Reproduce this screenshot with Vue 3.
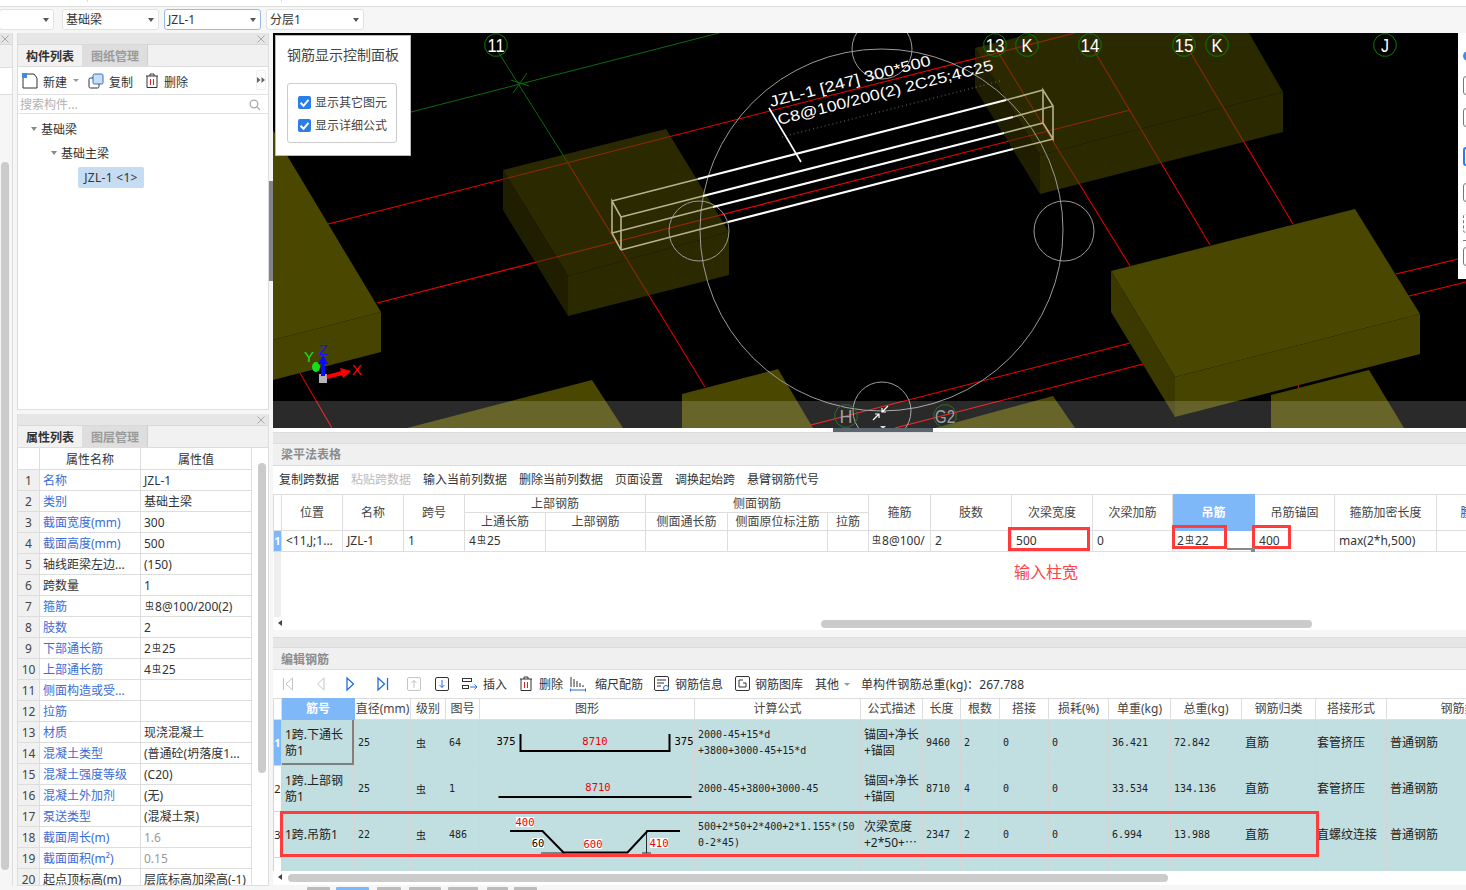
<template>
  <div class="app">
    <div class="topstrip"><i></i><i></i></div>
    <div class="selectbar">
      <div class="sel first"><span></span><b></b></div>
      <div class="sel"><span>基础梁</span><b></b></div>
      <div class="sel active"><span>JZL-1</span><b></b></div>
      <div class="sel last"><span>分层1</span><b></b></div>
    </div>

    <div class="work">
      <aside class="rail">
        <div class="phead"><svg class="close" width="8" height="8" viewBox="0 0 8 8"><path d="M.5.5l7 7M7.500.5l-7 7" stroke="#aaa" /></svg></div>
        <div class="rail-tab"></div>
        <div class="rail-tool"></div>
        <div class="rail-thumb"></div>
      </aside>

      <div class="leftcol">
        <section class="panel tree-panel">
          <div class="phead"><svg class="close" width="8" height="8" viewBox="0 0 8 8"><path d="M.5.5l7 7M7.500.5l-7 7" stroke="#aaa" /></svg></div>
          <div class="tabs">
            <span class="tab on">构件列表</span><span class="tab">图纸管理</span>
          </div>
          <div class="ltool">
            <svg width="16" height="16" viewBox="0 0 16 16" class="ic">
              <path d="M1 4v11h14V5l-3-4H5" fill="#fff" stroke="#333" />
              <rect x="0" y="0" width="5" height="5" fill="#3f8ae8" />
            </svg>
            <span class="lbl">新建</span><b class="mini-caret"></b>
            <svg width="16" height="16" viewBox="0 0 16 16" class="ic copy">
              <rect x="1" y="5" width="10" height="10" rx="1.5" fill="#fff" stroke="#333" />
              <rect x="5" y="1" width="10" height="10" rx="1.5" fill="#c9ddf8" stroke="#2f6fc0" />
            </svg>
            <span class="lbl">复制</span>
            <svg width="14" height="16" viewBox="0 0 14 16" class="ic del">
              <path d="M1 3h12M5 3V1h4v2M2 3v11.5h10V3" fill="none" stroke="#333" />
              <path d="M5.5 6v6M8.5 6v6" stroke="#d22" />
            </svg>
            <span class="lbl">删除</span>
            <span class="more"><svg width="8" height="6" viewBox="0 0 8 6"><path d="M0 0l3.500 3L0 6zM4.500 0L8 3 4.500 6z" fill="#666" /></svg></span>
          </div>
          <div class="search">
            <span>搜索构件...</span>
            <svg width="12" height="12" viewBox="0 0 12 12">
              <circle cx="5" cy="5" r="3.8" fill="none" stroke="#aaa" stroke-width="1.3" />
              <path d="M8 8l3 3" stroke="#aaa" stroke-width="1.3" />
            </svg>
          </div>
          <div class="tree">
            <div class="node n1"><b></b>基础梁</div>
            <div class="node n2"><b></b>基础主梁</div>
            <div class="leaf">JZL-1  &lt;1&gt;</div>
          </div>
        </section>

        <section class="panel prop-panel">
          <div class="phead"><svg class="close" width="8" height="8" viewBox="0 0 8 8"><path d="M.5.5l7 7M7.500.5l-7 7" stroke="#aaa" /></svg></div>
          <div class="tabs">
            <span class="tab on">属性列表</span><span class="tab">图层管理</span>
          </div>
          <div class="prop-body">
            <table class="grid props">
              <colgroup><col style="width:22px" /><col style="width:101px" /><col style="width:111px" /></colgroup>
              <thead>
                <tr><th></th><th>属性名称</th><th>属性值</th></tr>
              </thead>
              <tbody>
                <tr v-for="(p, i) in props" :key="i">
                  <td class="idx">{{ i + 1 }}</td>
                  <td :class="{ blue: p.blue }">{{ p.name }}</td>
                  <td :class="{ muted: p.muted }">
                    <template v-if="p.bar">{{ p.bar[0] }}<span class="bar">虫</span>{{ p.bar[1] }}</template>
                    <template v-else>{{ p.value }}</template>
                  </td>
                </tr>
              </tbody>
            </table>
            <div class="vscroll"><div class="vthumb"></div></div>
          </div>
        </section>
      </div>

      <div class="splitter"><div class="split-grip"></div></div>

      <div class="main">
        <div class="viewport">
          <svg class="scene" width="1193" height="395" viewBox="273 33 1193 395">
            <rect x="273" y="33" width="1193" height="395" fill="#000" />
            <!-- axis lines -->
            <g fill="none" stroke="#e00000" stroke-width="1.1">
              <path d="M328 224L1075 33" stroke="#f00000" />
              <path d="M377 303L1130 110" stroke="#f00000" />
              <path d="M568 163L705 387" />
              <path d="M998 52L1130 266" />
              <path d="M1092 47L1210 245" />
              <path d="M1189 50L1293 224" />
              <path d="M300 373L332 428" />
              <path d="M799 428L1130 343M1396 274L1458 259" stroke="#f00000" />
              <path d="M895 428L1143 364M1409 296L1466 282" stroke="#f00000" />
              <path d="M1298 385l1 4" />
            </g>
            <g fill="none" stroke="#0b6b0b" stroke-width="1">
              <path d="M497 50L568 163" />
              <path d="M411 112L719 33" />
              <path d="M513 93L527 73" />
              <path d="M511 80L529 86" />
            </g>
            <!-- faint blocks -->
            <g opacity="0.58">
              <polygon points="503,170 666,129 729,232 568,276" fill="#4a4700" />
              <polygon points="503,170 568,276 568,316 503,210" fill="#363400" />
              <polygon points="568,276 729,232 729,275 568,316" fill="#4a4700" />
              <polygon points="975,48 1035,33 1249,33 1283,92 1040,155" fill="#4a4700" />
              <polygon points="975,48 1040,155 1040,194 975,88" fill="#363400" />
              <polygon points="1040,155 1283,92 1283,132 1040,194" fill="#4a4700" />
            </g>
            <!-- solid blocks -->
            <polygon points="273,130 288,157 381,312 273,340" fill="#4a4700" />
            <polygon points="273,340 381,312 381,352 273,380" fill="#474400" />
            <polygon points="407,428 592,380 623,428" fill="#4a4700" />
            <polygon points="682,394 778,369 813,428 682,428" fill="#4a4700" />
            <polygon points="935,428 1053,396 1075,428" fill="#4a4700" />
            <polygon points="1271,395 1369,370 1404,428 1271,428" fill="#4a4700" />
            <polygon points="1111,271 1355,209 1420,314 1175,377" fill="#4a4700" />
            <polygon points="1111,271 1175,377 1175,417 1111,312" fill="#3b3900" />
            <polygon points="1175,377 1420,314 1420,354 1175,417" fill="#474400" />
            <!-- construction circles -->
            <g fill="none" stroke="#9a9a9a" stroke-width="1">
              <ellipse cx="881.5" cy="230" rx="181.5" ry="181" />
              <circle cx="699" cy="231" r="30" />
              <circle cx="1064" cy="231" r="30" />
              <circle cx="882" cy="49" r="30" />
              <circle cx="882" cy="411" r="29" />
            </g>
            <!-- beam wireframe -->
            <g fill="none" stroke="#b6b28b" stroke-width="1.6">
              <path d="M612 201L698 179M621 217L703 196M612 233L713 207M621 250L728 222" />
              <path d="M1006 100L1043 90M1013 117L1053 106M1004 133L1043 123M1013 149L1053 139" />
              <path d="M612 201v32l9 17v-33zM1043 90v33l10 16v-33z" />
            </g>
            <g fill="none" stroke="#fff" stroke-width="2.2">
              <path d="M698 179L1006 100M703 196L1013 117M713 207L1004 133M728 222L1013 149" />
              <path d="M769 108L801 162" stroke-width="1.6" />
            </g>
            <!-- beam label -->
            <path d="M782 137L1000 81" stroke="#777" stroke-dasharray="1 3" />
            <g class="beam-text" fill="#fff">
              <text transform="translate(771 107) rotate(-14.6)" textLength="166" lengthAdjust="spacingAndGlyphs">JZL-1 [247] 300*500</text>
              <text transform="translate(779 125) rotate(-14.4)" textLength="222" lengthAdjust="spacingAndGlyphs">C8@100/200(2) 2C25;4C25</text>
            </g>
            <!-- axis bubbles -->
            <g v-for="a in bubbles" :key="a.t + a.x">
              <polygon :points="gon(a.x, 45, 11.5)" fill="none" stroke="#0a7a0a" />
              <text class="bubble" :x="a.x" y="51.5" text-anchor="middle" :textLength="a.w" lengthAdjust="spacingAndGlyphs">{{ a.t }}</text>
            </g>
            <polygon :points="gon(846, 416, 11.5)" fill="none" stroke="#084f08" />
            <text class="bubble dim" x="846" y="423" text-anchor="middle">H</text>
            <polygon :points="gon(945, 416, 11.5)" fill="none" stroke="#084f08" />
            <text class="bubble dim" x="945" y="423" text-anchor="middle" textLength="20" lengthAdjust="spacingAndGlyphs">G2</text>
            <!-- coordinate gizmo -->
            <g>
              <rect x="319" y="374" width="8" height="9" fill="#b5b5b5" />
              <ellipse cx="316" cy="367" rx="4" ry="5" fill="#18e018" />
              <path d="M327 377L342 373" stroke="#f00" stroke-width="4" />
              <polygon points="340,368 351,371 343,378" fill="#f00" />
              <path d="M323 376V362" stroke="#0a0aff" stroke-width="4" />
              <polygon points="318,364 323,355 328,364" fill="#0a0aff" />
              <text class="giz" x="309" y="362" fill="#18e018" text-anchor="middle">Y</text>
              <text class="giz" x="323" y="355" fill="#1414ff" text-anchor="middle">Z</text>
              <text class="giz" x="357" y="375" fill="#f00" text-anchor="middle">X</text>
            </g>
            <!-- bottom bar -->
            <rect x="273" y="401" width="1193" height="27" fill="#fff" fill-opacity="0.165" />
            <g stroke="#fff" stroke-width="1.2" fill="none">
              <path d="M873 420L879 414M879 418V414H875" />
              <path d="M888 406L882 412M882 408V412H886" />
            </g>
            <polygon points="880,426 886,426 883,429" fill="#ddd" />
          </svg>

          <div class="control">
            <h4>钢筋显示控制面板</h4>
            <div class="control-box">
              <label class="chk"><span class="tick"><svg width="13" height="13" viewBox="0 0 13 13"><path d="M2.5 6.8l3 3 5-6" fill="none" stroke="#fff" stroke-width="2" /></svg></span>显示其它图元</label>
              <label class="chk"><span class="tick"><svg width="13" height="13" viewBox="0 0 13 13"><path d="M2.5 6.8l3 3 5-6" fill="none" stroke="#fff" stroke-width="2" /></svg></span>显示详细公式</label>
            </div>
          </div>

          <div class="side-strip">
            <span class="s1"></span><span class="s2"></span><span class="s2 s3"></span>
            <span class="s2 s4"></span><span class="s2 s5"></span><span class="s2 s6"></span><span class="s7"></span><span class="s2 s8"></span>
          </div>
        </div>

        <div class="handle"><div class="handle-bar"></div></div>

        <section class="tbl-panel upper">
          <div class="phead2"></div>
          <div class="ptitle">梁平法表格</div>
          <div class="utool">
            <span v-for="t in upperTools" :key="t" :class="{ off: t === '粘贴跨数据' }">{{ t }}</span>
          </div>
          <div class="utable">
            <table class="grid ut">
              <colgroup>
                <col v-for="(w, i) in upperCols" :key="i" :style="{ width: w + 'px' }" />
              </colgroup>
              <thead>
                <tr>
                  <th rowspan="2"></th>
                  <th rowspan="2">位置</th>
                  <th rowspan="2">名称</th>
                  <th rowspan="2">跨号</th>
                  <th colspan="2">上部钢筋</th>
                  <th colspan="3">侧面钢筋</th>
                  <th rowspan="2">箍筋</th>
                  <th rowspan="2">肢数</th>
                  <th rowspan="2">次梁宽度</th>
                  <th rowspan="2">次梁加筋</th>
                  <th rowspan="2" class="hot">吊筋</th>
                  <th rowspan="2">吊筋锚固</th>
                  <th rowspan="2">箍筋加密长度</th>
                  <th rowspan="2">腰筋</th>
                </tr>
                <tr>
                  <th>上通长筋</th><th>上部钢筋</th><th>侧面通长筋</th><th>侧面原位标注筋</th><th>拉筋</th>
                </tr>
              </thead>
              <tbody>
                <tr>
                  <td class="gut on">1</td>
                  <td>{{ firstPos }}</td>
                  <td>JZL-1</td>
                  <td>1</td>
                  <td>4<span class="bar">虫</span>25</td>
                  <td></td><td></td><td></td><td></td>
                  <td class="tight"><span class="bar">虫</span>8@100/</td>
                  <td>2</td>
                  <td>500</td>
                  <td>0</td>
                  <td>2<span class="bar">虫</span>22</td>
                  <td>400</td>
                  <td>max(2*h,500)</td>
                  <td></td>
                </tr>
              </tbody>
            </table>
            <div class="gut-rest"></div>
            <div class="mark m1"></div>
            <div class="mark m2"></div>
            <div class="mark m3"></div>
            <div class="cell-line"></div>
            <div class="cell-dot"></div>
            <div class="note">输入柱宽</div>
          </div>
          <div class="hscroll u">
            <span class="arrow"></span>
            <div class="hthumb"></div>
          </div>
        </section>

        <section class="tbl-panel lower">
          <div class="phead2"></div>
          <div class="ptitle">编辑钢筋</div>
          <div class="ltools">
            <svg class="nav n-a" width="12" height="16" viewBox="0 0 12 16"><path d="M1.5 2v12M10.5 2L4 8l6.5 6z" fill="none" stroke="#c4c4c4" /></svg>
            <svg class="nav n-b" width="9" height="16" viewBox="0 0 9 16"><path d="M8 2L1.5 8 8 14z" fill="none" stroke="#c4c4c4" /></svg>
            <svg class="nav n-c" width="9" height="16" viewBox="0 0 9 16"><path d="M1 2l6.5 6L1 14z" fill="none" stroke="#1f6fe0" stroke-width="1.3" /></svg>
            <svg class="nav n-d" width="12" height="16" viewBox="0 0 12 16"><path d="M1 2l6.5 6L1 14zM10.5 2v12" fill="none" stroke="#1f6fe0" stroke-width="1.3" /></svg>
            <svg class="nav n-e" width="14" height="16" viewBox="0 0 14 16"><rect x=".5" y="1.5" width="13" height="13" rx="1.5" fill="none" stroke="#c4c4c4" /><path d="M7 12V4.5M4.5 7L7 4.5 9.5 7" fill="none" stroke="#c4c4c4" /></svg>
            <svg class="nav n-f" width="14" height="16" viewBox="0 0 14 16"><rect x=".5" y="1.5" width="13" height="13" rx="1.5" fill="none" stroke="#333" /><path d="M7 4v7.5M4.5 9L7 11.5 9.5 9" fill="none" stroke="#1f6fe0" /></svg>
            <svg class="nav n-g" width="16" height="16" viewBox="0 0 16 16"><rect x=".5" y="2.5" width="9" height="3" fill="none" stroke="#333" /><rect x=".5" y="9.5" width="6" height="3" fill="none" stroke="#333" /><path d="M8 11h7M12.5 8.5L15 11l-2.5 2.5" fill="none" stroke="#1f6fe0" /></svg>
            <span class="tl t1">插入</span>
            <svg class="nav n-h" width="14" height="16" viewBox="0 0 14 16"><path d="M1 3h12M5 3V1h4v2M2 3v11.5h10V3" fill="none" stroke="#333" /><path d="M5.5 6v6M8.5 6v6" stroke="#d22" /></svg>
            <span class="tl t2">删除</span>
            <svg class="nav n-i" width="16" height="16" viewBox="0 0 16 16"><path d="M1 1v10M4 3v8M7 5v6M10 7v4M13 9v2" stroke="#333" fill="none" /><path d="M.5 14h15M.5 12.5v3M15.5 12.5v3" stroke="#1f6fe0" fill="none" /></svg>
            <span class="tl t3">缩尺配筋</span>
            <svg class="nav n-j" width="16" height="16" viewBox="0 0 16 16"><rect x=".5" y=".5" width="14" height="14" rx="1.5" fill="none" stroke="#333" /><path d="M3 4h9M3 7h7M3 10h4" stroke="#333" fill="none" /><circle cx="12" cy="12" r="2.5" fill="#fff" stroke="#1f6fe0" /></svg>
            <span class="tl t4">钢筋信息</span>
            <svg class="nav n-k" width="16" height="16" viewBox="0 0 16 16"><rect x=".5" y=".5" width="14" height="14" rx="1.5" fill="none" stroke="#333" /><path d="M4 4h4M4 4v7M4 11h7V7H8" fill="none" stroke="#333" /></svg>
            <span class="tl t5">钢筋图库</span>
            <span class="tl t6">其他</span>
            <b class="mini-caret t7"></b>
            <span class="tl t8">单构件钢筋总重(kg)：267.788</span>
          </div>

          <div class="ltable">
            <table class="grid lt">
              <colgroup>
                <col v-for="(w, i) in lowerCols" :key="i" :style="{ width: w + 'px' }" />
              </colgroup>
              <thead>
                <tr>
                  <th></th>
                  <th class="hot">筋号</th>
                  <th v-for="h in lowerHead" :key="h">{{ h }}</th>
                </tr>
              </thead>
              <tbody>
                <tr v-for="(r, i) in bars" :key="i">
                  <td class="gut" :class="{ on: i === 0 }">{{ i + 1 }}</td>
                  <td class="bname" :class="{ cur: i === 0 }">{{ r.name }}</td>
                  <td class="mono">{{ r.dia }}</td>
                  <td class="grade"><span v-if="r.dia">虫</span></td>
                  <td class="mono">{{ r.fig }}</td>
                  <td class="shape">
                    <svg v-if="i === 0" width="215" height="45" viewBox="0 0 215 45">
                      <path d="M40.5 14v17h149V14" fill="none" stroke="#000" stroke-width="2" />
                      <text class="sn" x="26" y="25" text-anchor="middle">375</text>
                      <text class="sn red" x="115" y="25" text-anchor="middle">8710</text>
                      <text class="sn" x="204" y="25" text-anchor="middle">375</text>
                    </svg>
                    <svg v-else-if="i === 1" width="215" height="45" viewBox="0 0 215 45">
                      <path d="M18.500 31H211.500" stroke="#000" stroke-width="2" />
                      <text class="sn red" x="118" y="25" text-anchor="middle">8710</text>
                    </svg>
                    <svg v-else-if="i === 2" width="215" height="45" viewBox="0 0 215 45">
                      <path d="M30 19h32.500l21 21.500h64l20-21.500H200" fill="none" stroke="#000" stroke-width="2" />
                      <path d="M61 41h23M166.500 18v23M162 41h9" fill="none" stroke="#000" stroke-width=".8" />
                      <rect x="36" y="5" width="18" height="10" fill="#fff" />
                      <text class="sn red" x="45" y="14" text-anchor="middle">400</text>
                      <rect x="52" y="26" width="12" height="10" fill="#fff" />
                      <text class="sn" x="58" y="35" text-anchor="middle">60</text>
                      <rect x="104" y="27" width="18" height="10" fill="#fff" />
                      <text class="sn red" x="113" y="36" text-anchor="middle">600</text>
                      <rect x="170" y="26" width="18" height="10" fill="#fff" />
                      <text class="sn red" x="179" y="35" text-anchor="middle">410</text>
                    </svg>
                    <svg v-else width="215" height="14" viewBox="0 0 215 14">
                      <path d="M105.500 14V4h61.500v10M144 14l13-10" fill="none" stroke="#000" stroke-width="2" />
                    </svg>
                  </td>
                  <td class="mono wrap">{{ r.formula }}</td>
                  <td class="wrap">{{ r.desc }}</td>
                  <td class="mono">{{ r.len }}</td>
                  <td class="mono">{{ r.num }}</td>
                  <td class="mono">{{ r.lap }}</td>
                  <td class="mono">{{ r.loss }}</td>
                  <td class="mono">{{ r.unit }}</td>
                  <td class="mono">{{ r.total }}</td>
                  <td>{{ r.kind }}</td>
                  <td class="nopad">{{ r.joint }}</td>
                  <td>{{ r.type }}</td>
                </tr>
              </tbody>
            </table>
            <div class="mark row-mark"></div>
          </div>
          <div class="hscroll l">
            <span class="arrow"></span>
            <div class="hthumb"></div>
          </div>
        </section>

        <div class="bottom-tabs">
          <i v-for="t in bottomTabs" :key="t.x" :class="{ blue: t.blue }" :style="{ left: t.x + 'px', width: t.w + 'px' }"></i>
        </div>
      </div>
    </div>
  </div>
</template>

<script setup>
const firstPos = "<11,J;1...";

const props = [
  { name: "名称", value: "JZL-1", blue: true },
  { name: "类别", value: "基础主梁", blue: true },
  { name: "截面宽度(mm)", value: "300", blue: true },
  { name: "截面高度(mm)", value: "500", blue: true },
  { name: "轴线距梁左边...", value: "(150)" },
  { name: "跨数量", value: "1" },
  { name: "箍筋", bar: ["", "8@100/200(2)"], blue: true },
  { name: "肢数", value: "2", blue: true },
  { name: "下部通长筋", bar: ["2", "25"], blue: true },
  { name: "上部通长筋", bar: ["4", "25"], blue: true },
  { name: "侧面构造或受...", value: "", blue: true },
  { name: "拉筋", value: "", blue: true },
  { name: "材质", value: "现浇混凝土", blue: true },
  { name: "混凝土类型", value: "(普通砼(坍落度1...", blue: true },
  { name: "混凝土强度等级", value: "(C20)", blue: true },
  { name: "混凝土外加剂", value: "(无)", blue: true },
  { name: "泵送类型", value: "(混凝土泵)", blue: true },
  { name: "截面周长(m)", value: "1.6", blue: true, muted: true },
  { name: "截面面积(m²)", value: "0.15", blue: true, muted: true },
  { name: "起点顶标高(m)", value: "层底标高加梁高(-1)" },
];

const bubbles = [
  { t: "11", x: 496, w: 17 },
  { t: "13", x: 995, w: 19 },
  { t: "K", x: 1027, w: 11 },
  { t: "14", x: 1090, w: 19 },
  { t: "15", x: 1184, w: 19 },
  { t: "K", x: 1217, w: 11 },
  { t: "J", x: 1385, w: 8 },
];

const gon = (cx, cy, r) => {
  const pts = [];
  for (let i = 0; i < 12; i++) {
    const a = (Math.PI / 6) * i + Math.PI / 12;
    pts.push((cx + r * Math.cos(a)).toFixed(1) + "," + (cy + r * Math.sin(a)).toFixed(1));
  }
  return pts.join(" ");
};

const upperTools = ["复制跨数据", "粘贴跨数据", "输入当前列数据", "删除当前列数据", "页面设置", "调换起始跨", "悬臂钢筋代号"];
const upperCols = [8, 61, 61, 61, 81, 100, 82, 100, 41, 62, 81, 81, 80, 82, 80, 102, 72];

const lowerCols = [8, 73, 56, 35, 34, 215, 166, 62, 38, 39, 49, 60, 62, 71, 74, 71, 156];
const lowerHead = ["直径(mm)", "级别", "图号", "图形", "计算公式", "公式描述", "长度", "根数", "搭接", "损耗(%)", "单重(kg)", "总重(kg)", "钢筋归类", "搭接形式", "钢筋类型"];

const bars = [
  { name: "1跨.下通长筋1", dia: "25", fig: "64", formula: "2000-45+15*d\n+3800+3000-45+15*d", desc: "锚固+净长\n+锚固", len: "9460", num: "2", lap: "0", loss: "0", unit: "36.421", total: "72.842", kind: "直筋", joint: "套管挤压", type: "普通钢筋" },
  { name: "1跨.上部钢筋1", dia: "25", fig: "1", formula: "2000-45+3800+3000-45", desc: "锚固+净长\n+锚固", len: "8710", num: "4", lap: "0", loss: "0", unit: "33.534", total: "134.136", kind: "直筋", joint: "套管挤压", type: "普通钢筋" },
  { name: "1跨.吊筋1", dia: "22", fig: "486", formula: "500+2*50+2*400+2*1.155*(50\n0-2*45)", desc: "次梁宽度\n+2*50+⋯", len: "2347", num: "2", lap: "0", loss: "0", unit: "6.994", total: "13.988", kind: "直筋", joint: "直螺纹连接", type: "普通钢筋" },
  { name: "", dia: "", fig: "", formula: "2*((300-2*45)+(500-2*45))", desc: "", len: "", num: "", lap: "", loss: "", unit: "", total: "", kind: "", joint: "", type: "" },
];

const bottomTabs = [
  { x: 34, w: 23 },
  { x: 63, w: 33, blue: true },
  { x: 104, w: 24 },
  { x: 136, w: 32 },
  { x: 175, w: 30 },
  { x: 214, w: 21 },
  { x: 241, w: 23 },
];
</script>

<style scoped>
.app {
  width: 1466px;
  height: 890px;
  overflow: hidden;
  display: flex;
  flex-direction: column;
  background: #f6f6f6;
  color: #333;
  font: 12px/16px "Noto Sans", "Noto Sans CJK SC", sans-serif;
}
.topstrip {
  height: 6px;
  flex: none;
  background: #fff;
  border-bottom: 1px solid #ddd;
  position: relative;
}
.topstrip i {
  position: absolute;
  top: 0;
  left: 87px;
  width: 1px;
  height: 2px;
  background: #ddd;
}
.topstrip i + i {
  left: 281px;
}
.selectbar {
  height: 26px;
  flex: none;
  display: flex;
  padding: 2px 0 0 0;
  box-sizing: border-box;
}
.sel {
  width: 97px;
  height: 21px;
  margin-right: 5px;
  background: #fff;
  border: 1px solid #e2e2e2;
  border-radius: 3px;
  box-sizing: border-box;
  display: flex;
  align-items: center;
  justify-content: space-between;
  padding: 0 3px;
  line-height: 18px;
}
.sel.first {
  width: 55px;
  margin-left: -1px;
  margin-right: 8px;
}
.sel.active {
  border-color: #9db9e6;
}
.sel.last {
  width: 98px;
}
.sel b {
  width: 0;
  height: 0;
  border: 3px solid transparent;
  border-top: 4px solid #555;
  border-bottom: 0;
  margin-right: 1px;
}
.work {
  flex: 1;
  display: flex;
  min-height: 0;
}
.rail {
  width: 13px;
  flex: none;
  border-right: 1px solid #ddd;
  box-sizing: border-box;
  height: 853px;
  position: relative;
}
.phead {
  height: 12px;
  background: #e6e6e6;
  border-bottom: 1px solid #d8d8d8;
  box-sizing: border-box;
  display: flex;
  justify-content: flex-end;
  align-items: center;
  padding-right: 3px;
}
.close {
  display: block;
}
.rail-tab {
  height: 22px;
  background: #f1f1f1;
}
.rail-tool {
  height: 28px;
  background: #fff;
  border-top: 1px solid #ddd;
  border-bottom: 1px solid #ddd;
  box-sizing: border-box;
}
.rail-thumb {
  width: 8px;
  height: 708px;
  margin: 67px 0 0 1px;
  background: #cbcbcb;
  border-radius: 4px;
}
.leftcol {
  width: 252px;
  flex: none;
  margin-left: 4px;
  display: flex;
  flex-direction: column;
  gap: 4px;
}
.panel {
  background: #fff;
  border: 1px solid #ddd;
  border-top: 0;
  box-sizing: border-box;
  overflow: hidden;
}
.tree-panel {
  height: 377px;
}
.prop-panel {
  height: 472px;
}
.tabs {
  height: 22px;
  display: flex;
  background: #f1f1f1;
  border-bottom: 1px solid #ddd;
  box-sizing: border-box;
}
.tab {
  width: 65px;
  text-align: center;
  line-height: 23px;
  font-weight: 700;
  color: #9a9a9a;
  background: #dedede;
  border-right: 1px solid #cfcfcf;
  box-sizing: border-box;
}
.tab.on {
  color: #333;
  background: #f1f1f1;
  border-right: 1px solid #ddd;
}
.ltool {
  height: 28px;
  display: flex;
  align-items: center;
  border-bottom: 1px solid #e2e2e2;
  box-sizing: border-box;
  padding-left: 4px;
  position: relative;
}
.ltool .ic {
  flex: none;
}
.lbl {
  margin-left: 5px;
  padding-top: 5px;
}
.mini-caret {
  width: 0;
  height: 0;
  border: 3px solid transparent;
  border-top: 3px solid #999;
  border-bottom: 0;
  display: inline-block;
}
.ltool .mini-caret {
  margin-left: 6px;
}
.ltool .copy {
  margin-left: 9px;
}
.ltool .del {
  margin-left: 12px;
}
.more {
  position: absolute;
  right: 2px;
  top: 3px;
  width: 10px;
  height: 20px;
  border: 1px solid #eee;
  border-radius: 2px;
  box-sizing: border-box;
  display: flex;
  align-items: center;
  justify-content: center;
}
.search {
  height: 19px;
  display: flex;
  align-items: center;
  justify-content: space-between;
  padding: 2px 7px 0 2px;
  box-sizing: border-box;
  color: #b2b2b2;
  border-bottom: 1px solid #e2e2e2;
}
.tree {
  padding-top: 3px;
}
.node {
  height: 24px;
  line-height: 21px;
  display: flex;
  align-items: center;
}
.node b {
  width: 0;
  height: 0;
  border: 3px solid transparent;
  border-top: 4px solid #888;
  border-bottom: 0;
  margin-right: 4px;
}
.n1 {
  padding-left: 13px;
}
.n2 {
  padding-left: 33px;
}
.leaf {
  margin: 2px 0 0 60px;
  width: 66px;
  height: 21px;
  line-height: 21px;
  background: #c6dcf3;
  border-radius: 2px;
  text-align: center;
  white-space: pre;
  letter-spacing: 0.3px;
}
.prop-body {
  display: flex;
}
.grid {
  border-collapse: collapse;
  table-layout: fixed;
  background: #fff;
}
.grid th,
.grid td {
  border: 1px solid #ddd;
  font-weight: 400;
  overflow: hidden;
  white-space: nowrap;
  padding: 0;
}
.props {
  width: 234px;
  flex: none;
  margin-left: -1px;
}
.props th {
  height: 19px;
  padding-top: 2px;
  border-top: 0;
}
.props td {
  height: 18px;
  padding: 2px 0 0 3px;
}
.props td.idx {
  background: #f0f0f0;
  text-align: center;
  padding: 2px 0 0;
  color: #444;
}
.blue {
  color: #3a6cd6;
}
.muted {
  color: #999;
}
.bar {
  font-size: 9px;
  vertical-align: 2px;
  margin: 0 1px;
  line-height: 1;
}
.vscroll {
  width: 17px;
  flex: none;
}
.vthumb {
  width: 8px;
  height: 310px;
  margin: 15px 0 0 6px;
  background: #cbcbcb;
  border-radius: 4px;
}
.splitter {
  width: 4px;
  flex: none;
}
.split-grip {
  height: 100px;
  margin-top: 148px;
  background: #80848a;
}
.main {
  width: 1193px;
  flex: none;
  display: flex;
  flex-direction: column;
  position: relative;
}
.viewport {
  height: 395px;
  flex: none;
  position: relative;
  overflow: hidden;
  background: #000;
}
.scene {
  display: block;
}
.beam-text {
  font: 15px "Liberation Sans", sans-serif;
}
.bubble {
  font: 18px "Liberation Sans", sans-serif;
  fill: #fff;
}
.bubble.dim {
  fill: #8f8f8f;
}
.giz {
  font: 15px "Liberation Sans", sans-serif;
}
.control {
  position: absolute;
  left: 2px;
  top: 2px;
  width: 136px;
  height: 121px;
  background: #fff;
  border: 1px solid #bbb;
  box-sizing: border-box;
  padding: 9px 11px 0;
}
.control h4 {
  margin: 0 0 18px;
  font-size: 14px;
  line-height: 20px;
  font-weight: 400;
  color: #444;
  white-space: nowrap;
}
.control-box {
  width: 110px;
  height: 60px;
  border: 1px solid #ccc;
  border-radius: 3px;
  box-sizing: border-box;
  padding: 7px 0 0 10px;
}
.chk {
  display: flex;
  align-items: center;
  height: 23px;
  color: #444;
}
.tick {
  width: 13px;
  height: 13px;
  margin-right: 4px;
  background: #2b7de9;
  border-radius: 2px;
  display: flex;
}
.side-strip {
  position: absolute;
  right: 0;
  top: 0;
  width: 8px;
  height: 246px;
  background: #fff;
  overflow: hidden;
}
.side-strip span {
  position: absolute;
  left: 5px;
  width: 10px;
  box-sizing: border-box;
}
.s1 {
  top: 18px;
  height: 10px;
  border-radius: 50%;
  background: #3a8ee8;
}
.s2 {
  top: 43px;
  height: 19px;
  border: 1px solid #777;
  border-radius: 3px;
}
.s3 {
  top: 75px;
}
.s4 {
  top: 114px;
  border-color: #2b7de9;
  border-width: 2px;
}
.s5 {
  top: 150px;
}
.s6 {
  top: 181px;
  border-style: dashed;
}
.s7 {
  top: 207px;
  height: 1px;
  background: #777;
}
.s8 {
  top: 214px;
}
.handle {
  height: 4px;
  flex: none;
  background: #fff;
}
.handle-bar {
  width: 100px;
  height: 4px;
  margin-left: 560px;
  background: #5b6670;
}
.tbl-panel {
  flex: none;
  background: #fff;
  overflow: hidden;
}
.upper {
  height: 198px;
}
.lower {
  height: 248px;
  margin-top: 7px;
}
.phead2 {
  height: 12px;
  background: #e6e6e6;
  border-top: 1px solid #ddd;
  border-bottom: 1px solid #ddd;
  box-sizing: border-box;
}
.ptitle {
  height: 22px;
  line-height: 21px;
  padding-left: 8px;
  background: #f0f0f0;
  border-bottom: 1px solid #ddd;
  box-sizing: border-box;
  font-weight: 700;
  color: #8c8c8c;
}
.lower .phead2 {
  height: 11px;
}
.lower .ptitle {
  line-height: 23px;
}
.utool {
  height: 28px;
  display: flex;
  gap: 12px;
  align-items: center;
  padding-left: 6px;
}
.utool .off {
  color: #bbb;
}
.utable,
.ltable {
  position: relative;
  overflow: hidden;
}
.utable {
  height: 123px;
}
.ut {
  width: 1235px;
  text-align: center;
}
.ut th {
  height: 15px;
  padding-top: 1px;
  line-height: 16px;
  color: #444;
}
.ut td {
  height: 19px;
  padding: 0 0 1px 4px;
  text-align: left;
}
.ut td.tight {
  padding-left: 2px;
}
.grid th.hot {
  background: #7fb8f8;
  color: #fff;
  font-weight: 700;
  border-color: #7fb8f8;
}
.ut td.gut,
.lt td.gut {
  padding: 0;
  text-align: center;
  font-size: 11px;
}
td.gut.on {
  background: #7fb8f8;
  color: #fff;
  font-weight: 700;
}
.gut-rest {
  width: 7px;
  height: 68px;
  margin-left: 1px;
  background: #eee;
}
.mark {
  position: absolute;
  border: 3px solid #ff3b3b;
  box-sizing: border-box;
}
.m1 {
  left: 735px;
  top: 33px;
  width: 82px;
  height: 24px;
}
.m2 {
  left: 899px;
  top: 31px;
  width: 55px;
  height: 24px;
}
.m3 {
  left: 979px;
  top: 31px;
  width: 39px;
  height: 24px;
}
.cell-line {
  position: absolute;
  left: 954px;
  top: 54px;
  width: 24px;
  height: 2px;
  background: #888;
}
.cell-dot {
  position: absolute;
  left: 978px;
  top: 54px;
  width: 4px;
  height: 4px;
  background: #888;
}
.note {
  position: absolute;
  left: 741px;
  top: 67px;
  font-size: 16px;
  line-height: 22px;
  color: #f44;
}
.hscroll {
  height: 13px;
  position: relative;
  background: #fff;
}
.arrow {
  position: absolute;
  left: 5px;
  top: 3px;
  width: 0;
  height: 0;
  border: 3.5px solid transparent;
  border-right: 4px solid #444;
  border-left: 0;
}
.hthumb {
  position: absolute;
  top: 3px;
  height: 8px;
  background: #cbcbcb;
  border-radius: 4px;
}
.u .hthumb {
  left: 548px;
  width: 491px;
}
.l {
  height: 14px;
}
.l .hthumb {
  left: 15px;
  width: 880px;
}
.ltools {
  height: 28px;
  position: relative;
  line-height: 29px;
  white-space: nowrap;
}
.nav {
  position: absolute;
  top: 6px;
}
.n-a { left: 9px; }
.n-b { left: 43px; }
.n-c { left: 73px; }
.n-d { left: 104px; }
.n-e { left: 134px; }
.n-f { left: 162px; }
.n-g { left: 189px; }
.n-h { left: 246px; }
.n-i { left: 297px; }
.n-j { left: 381px; }
.n-k { left: 462px; }
.tl {
  position: absolute;
  top: 0;
}
.t1 { left: 210px; }
.t2 { left: 266px; }
.t3 { left: 322px; }
.t4 { left: 402px; }
.t5 { left: 482px; }
.t6 { left: 542px; }
.t7 { position: absolute; left: 571px; top: 13px; }
.t8 { left: 588px; letter-spacing: 0.1px; }
.ltable {
  height: 173px;
}
.lt {
  width: 1269px;
}
.lt th {
  height: 20px;
  text-align: center;
  color: #444;
}
.lt td {
  height: 45px;
  background: #c1dee1;
  border-color: #d4d4d4;
  padding-left: 3px;
  white-space: normal;
  line-height: 16px;
  color: #222;
}
.lt td.gut {
  background: #fff;
}
.lt td.gut.on {
  background: #7fb8f8;
}
.lt td.bname {
  word-break: break-all;
}
.lt td.cur {
  box-shadow: inset -2px -2px 0 #808080;
}
.lt td.mono {
  font: 10px/15px "DejaVu Sans Mono", "Liberation Mono", monospace;
  padding-left: 3px;
}
.lt td.wrap {
  white-space: pre-wrap;
}
.lt td.mono.wrap {
  line-height: 16px;
}
.lt td.grade {
  padding: 0 0 0 5px;
  font-size: 10px;
}
.lt td.shape {
  padding: 0;
}
.lt td.shape svg {
  display: block;
}
.lt td.nopad {
  padding-left: 1px;
  white-space: nowrap;
}
.sn {
  font: 10.5px "DejaVu Sans Mono", "Liberation Mono", monospace;
  fill: #000;
}
.sn.red {
  fill: #e00;
}
.row-mark {
  left: 7px;
  top: 113px;
  width: 1039px;
  height: 46px;
}
.bottom-tabs {
  flex: 1;
  position: relative;
  background: #f6f6f6;
  overflow: hidden;
}
.bottom-tabs i {
  position: absolute;
  top: 2px;
  height: 4px;
  background: #bbb;
  border-radius: 1px;
}
.bottom-tabs i.blue {
  background: #7fb8f8;
}
</style>
